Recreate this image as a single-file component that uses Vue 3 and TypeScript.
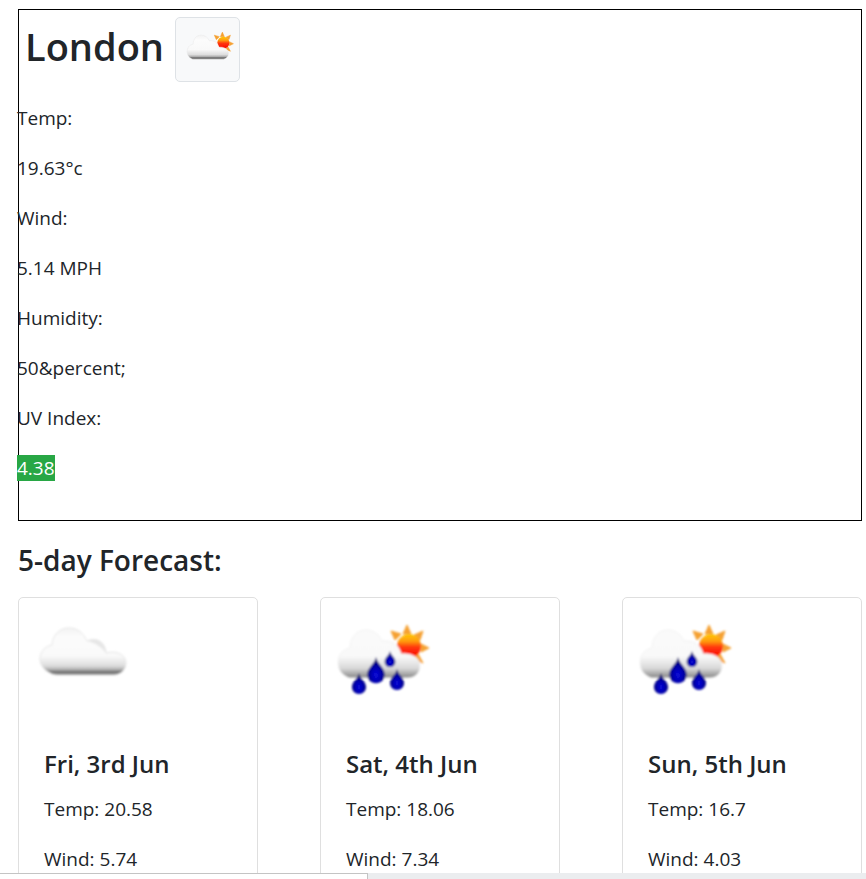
<script setup lang="ts">
interface Day {
  title: string
  icon: 'cloud' | 'rain'
  temp: string
  wind: string
}

const city = 'London'

const readings: { label: string; value: string; uv?: boolean }[] = [
  { label: 'Temp:', value: '19.63°c' },
  { label: 'Wind:', value: '5.14 MPH' },
  { label: 'Humidity:', value: '50&percent;' },
  { label: 'UV Index:', value: '4.38', uv: true },
]

const days: Day[] = [
  { title: 'Fri, 3rd Jun', icon: 'cloud', temp: '20.58', wind: '5.74' },
  { title: 'Sat, 4th Jun', icon: 'rain', temp: '18.06', wind: '7.34' },
  { title: 'Sun, 5th Jun', icon: 'rain', temp: '16.7', wind: '4.03' },
]
</script>

<template>
  <div class="shell">
    <svg class="defs" aria-hidden="true">
      <defs>
        <linearGradient id="cloudFill" x1="0" y1="0" x2="0" y2="1">
          <stop offset="0" stop-color="#f3f3f3" />
          <stop offset="0.2" stop-color="#fcfcfc" />
          <stop offset="0.6" stop-color="#f9f9f9" />
          <stop offset="0.8" stop-color="#dedede" />
          <stop offset="0.88" stop-color="#b5b5b5" />
          <stop offset="0.93" stop-color="#747474" />
          <stop offset="1" stop-color="#7c7c7c" />
        </linearGradient>
        <linearGradient id="wetCloudFill" x1="0" y1="0" x2="0" y2="1">
          <stop offset="0" stop-color="#fafafa" />
          <stop offset="0.55" stop-color="#f9f9f9" />
          <stop offset="0.8" stop-color="#d8d8d8" />
          <stop offset="1" stop-color="#858585" />
        </linearGradient>
        <linearGradient id="sunFill" x1="0" y1="0" x2="0" y2="1">
          <stop offset="0" stop-color="#ffc800" />
          <stop offset="0.3" stop-color="#ff9d10" />
          <stop offset="0.55" stop-color="#ff3508" />
          <stop offset="1" stop-color="#fa0505" />
        </linearGradient>
        <radialGradient id="dropFill" cx="0.5" cy="0.68" r="0.6">
          <stop offset="0" stop-color="#0808dc" />
          <stop offset="0.5" stop-color="#0404ac" />
          <stop offset="1" stop-color="#08085c" />
        </radialGradient>
        <filter id="soft" x="-10%" y="-10%" width="120%" height="120%">
          <feGaussianBlur stdDeviation="0.9" />
        </filter>
        <g id="sun">
          <g fill="#f5a030" stroke="#f5a030" stroke-width="1" stroke-linejoin="round">
            <path d="M86 27 L90 36 L82 36 Z" />
            <path d="M70 33 L80 36 L74 42 Z" />
            <path d="M102 33 L99 42 L93 37 Z" />
            <path d="M108 50 L100 54 L100 46 Z" />
            <path d="M102 65 L92 61 L97 56 Z" />
          </g>
          <circle cx="88" cy="48" r="12" fill="url(#sunFill)" />
        </g>
        <path
          id="sunnyCloud"
          d="M26 79 C20 76 17 71 17 65 C17 57 22 51 29 50 C29 39 36 32 45 32 C52 32 58 36 61 43 C71 42 78 47 80 56 C91 55 99 60 99 68 C99 75 94 80 87 80 L31 80 C29 80 27 80 26 79 Z"
        />
        <path id="drop" d="M0 0 C1 6 7 8 7 14 C7 18 4 21 0 21 C-4 21 -7 18 -7 14 C-7 8 -1 6 0 0 Z" />
      </defs>
    </svg>

    <main class="page">
      <section class="current">
        <header class="city">
          <h2>{{ city }}</h2>
          <svg class="city-icon" viewBox="0 0 125 125" role="img" aria-label="Few clouds">
            <g filter="url(#soft)">
              <use href="#sun" x="6" y="1" />
              <use href="#sunnyCloud" x="5" y="2" fill="url(#cloudFill)" stroke="#e9e9e9" stroke-width="1" />
            </g>
          </svg>
        </header>
        <div class="readings">
          <template v-for="r in readings" :key="r.label">
            <p>{{ r.label }}</p>
            <p><span :class="{ uv: r.uv }">{{ r.value }}</span></p>
          </template>
        </div>
      </section>

      <h3>5-day Forecast:</h3>

      <section class="cards">
        <article v-for="d in days" :key="d.title" class="card">
          <svg v-if="d.icon === 'cloud'" class="card-icon" viewBox="0 0 125 125" role="img" aria-label="Cloudy">
            <g filter="url(#soft)">
              <path
                d="M31 75 C25 72 21 67 21 61 C21 54 26 48 33 47 C34 36 41 30 50 30 C59 30 64 35 68 43 C77 39 86 43 87 55 C98 52 107 57 107 65 C107 72 101 77 95 77 L38 77 C35 77 33 76 31 75 Z"
                fill="url(#cloudFill)"
                stroke="#e5e5e5"
                stroke-width="1"
              />
              <path d="M68 43 C77 39 86 43 87 55 C82 48 76 45 68 43 Z" fill="#e6e6e6" />
            </g>
          </svg>
          <svg v-else class="card-icon" viewBox="0 0 125 125" role="img" aria-label="Rain">
            <g filter="url(#soft)">
              <use href="#sun" />
              <use href="#sunnyCloud" fill="url(#wetCloudFill)" stroke="#f2f2f2" stroke-width="1" />
              <g fill="url(#dropFill)">
                <use href="#drop" transform="translate(38 75)" />
                <use href="#drop" transform="translate(55 59) scale(1.25)" />
                <use href="#drop" transform="translate(69 53) scale(0.76)" />
                <use href="#drop" transform="translate(76 71)" />
              </g>
            </g>
          </svg>
          <div class="card-body">
            <h5>{{ d.title }}</h5>
            <p>Temp: {{ d.temp }}</p>
            <p>Wind: {{ d.wind }}</p>
          </div>
        </article>
      </section>
    </main>

    <footer class="status"><div class="status-tab"></div></footer>
  </div>
</template>

<style>
body {
  margin: 0;
  background: #fff;
}
</style>

<style scoped>
.shell {
  display: flex;
  flex-direction: column;
  height: 100vh;
  overflow: hidden;
  color: #212529;
  font-family: 'Segoe UI', 'Open Sans', 'Noto Sans', sans-serif;
  font-size: 19px;
  line-height: 30px;
}

.defs {
  position: absolute;
  width: 0;
  height: 0;
}

.page {
  flex: 1;
  min-height: 0;
  overflow: hidden;
  padding: 9px 4px 0 18px;
}

.current {
  border: 1px solid #000;
  padding: 7px 0 17px;
}

.city {
  display: flex;
  align-items: flex-start;
  gap: 11px;
  padding-left: 6px;
}

h2,
h3,
h5 {
  margin: 0;
  font-weight: 600;
}

h2 {
  font-size: 38px;
  line-height: 58px;
}

.city-icon {
  box-sizing: border-box;
  width: 65px;
  height: 65px;
  border: 1px solid #dee2e6;
  border-radius: 5px;
  background: #f8f9fa;
}

.readings {
  margin: 21px 0 0 -2px;
}

p {
  margin: 0 0 20px;
}

.uv {
  background: #28a745;
  color: #fff;
}

h3 {
  margin: 20px 0 18px;
  font-size: 28px;
  line-height: 38px;
}

.cards {
  display: flex;
  justify-content: space-between;
}

.card {
  box-sizing: border-box;
  flex: 0 0 240px;
  border: 1px solid #dfdfdf;
  border-radius: 5px;
}

.card-icon {
  display: block;
  width: 125px;
  height: 125px;
}

.card-body {
  padding: 26px 25px;
}

h5 {
  margin-bottom: 15px;
  font-size: 24px;
  line-height: 30px;
}

.status {
  flex: 0 0 6px;
  background: #ebedef;
}

.status-tab {
  box-sizing: border-box;
  width: 368px;
  max-width: 100%;
  height: 6px;
  border: solid #c4c4c4;
  border-width: 1px 1px 0 0;
  background: #fff;
}
</style>
